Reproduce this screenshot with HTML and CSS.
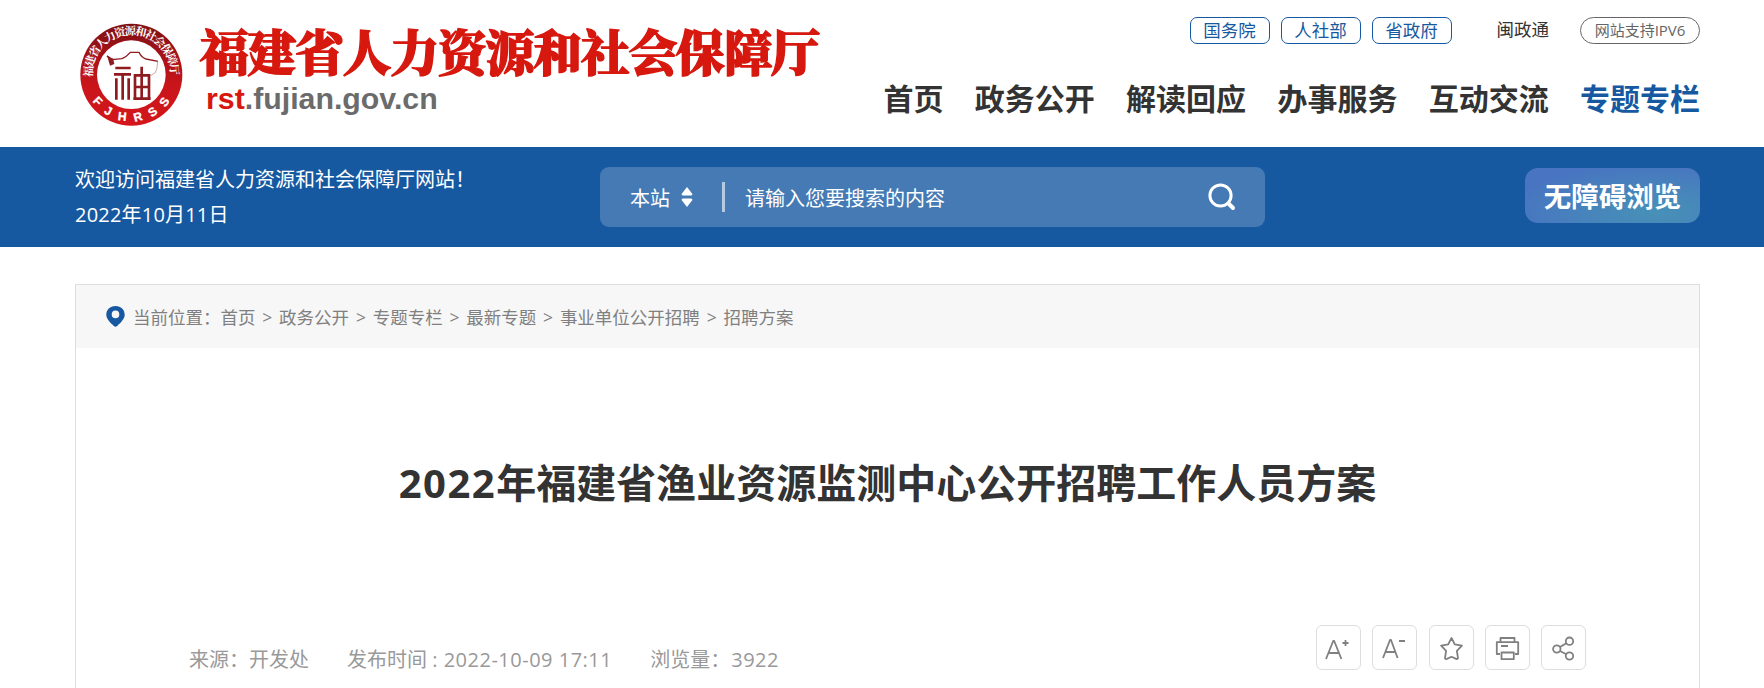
FILE: index.html
```html
<!DOCTYPE html>
<html lang="zh-CN">
<head>
    <meta charset="UTF-8">
    <meta name="viewport" content="width=device-width, initial-scale=1.0">
    <title>2022年福建省渔业资源监测中心公开招聘工作人员方案</title>
    <link rel="stylesheet" href="styles.css">
</head>
<body>
    <header class="header container">
        <a href="#" class="logo">
            <svg width="750" height="147" viewBox="45 -30 2250 441">
                <defs>
                    <linearGradient id="ring" x1="0" y1="0" x2="0" y2="1">
                        <stop offset="0" stop-color="#7d1015"/>
                        <stop offset="0.6" stop-color="#c9151a"/>
                        <stop offset="1" stop-color="#d3161b"/>
                    </linearGradient>
                    <path id="arc-top" d="M98 202 A116.5 116.5 0 1 1 330 202"/>
                    <path id="arc-bottom" d="M74 194 A140 140 0 0 0 354 194"/>
                </defs>
                <circle cx="214" cy="194" r="153" fill="url(#ring)"/>
                <circle cx="214" cy="194" r="103" fill="#fff"/>
                <text class="ring-cn"><textPath href="#arc-top" textLength="382">福建省人力资源和社会保障厅</textPath></text>
                <text class="ring-en"><textPath href="#arc-bottom" startOffset="53%" text-anchor="middle">FJHRSS</textPath></text>
                <g fill="none" stroke="#8f1a1f">
                    <path stroke-width="4" d="M141 138 Q151 149 164 148 L186 146 Q199 141 211 127 H237 Q244 143 258 147 L294 154"/>
                    <path stroke-width="2" stroke="#b9787a" d="M293 154 Q292 178 286 188 L271 197"/>
                    <path fill="#8f1a1f" stroke="none" d="M141 136 L160 148 L163 162 L150 167 Z"/>
                    <path stroke-width="8" d="M166 174 H212 M162 193 H213 M188 193 V269 M169 205 V269 M206 205 V269 M245 170 V266 M225 266 V196 H267 V266 M220 266 H272 M225 231 H267"/>
                </g>
                <text class="logo-name" x="419" y="183" textLength="1862">福建省人力资源和社会保障厅</text>
                <text class="logo-url" x="438" y="298" textLength="695" lengthAdjust="spacingAndGlyphs"><tspan fill="#d6180f">rst</tspan>.fujian.gov.cn</text>
            </svg>
        </a>
        <div class="header-right">
            <div class="top-links">
                <a href="#" class="dept">国务院</a>
                <a href="#" class="dept">人社部</a>
                <a href="#" class="dept">省政府</a>
                <a href="#" class="mzt">闽政通</a>
                <span class="ipv6">网站支持IPV6</span>
            </div>
            <nav class="nav">
                <a href="#">首页</a>
                <a href="#">政务公开</a>
                <a href="#">解读回应</a>
                <a href="#">办事服务</a>
                <a href="#">互动交流</a>
                <a href="#" class="active">专题专栏</a>
            </nav>
        </div>
    </header>

    <div class="bar">
        <div class="bar-inner container">
            <div class="welcome">
                <p>欢迎访问福建省人力资源和社会保障厅网站！</p>
                <p class="today">2022年10月11日</p>
            </div>
            <div class="search">
                <span class="search-type">本站</span>
                <svg class="search-arrows" width="12" height="22" viewBox="0 0 12 22"><path fill="#fff" d="M6 1 L11.4 8 Q11.6 9.4 10 9.5 H2 Q.4 9.4 .6 8 Z M6 21 L.6 14 Q.4 12.6 2 12.5 H10 Q11.6 12.6 11.4 14 Z"/></svg>
                <span class="search-line"></span>
                <span class="search-text">请输入您要搜索的内容</span>
                <svg class="search-icon" width="28" height="28" viewBox="0 0 28 28" fill="none" stroke="#fff" stroke-linecap="round"><circle cx="12.5" cy="12.5" r="10.6" stroke-width="3"/><path stroke-width="4" d="M20.5 20.5 L25 25"/></svg>
            </div>
            <a href="#" class="barrier-free">无障碍浏览</a>
        </div>
    </div>

    <main class="main">
        <div class="crumbs">
            <svg class="pin" width="19" height="21" viewBox="0 0 19 21"><path fill="#1659a1" fill-rule="evenodd" d="M9.5 0 C4 0 .3 3.9 .3 8.8 C.3 13.5 5 17.2 7.8 20 Q9.5 21.5 11.2 20 C14 17.2 18.7 13.5 18.7 8.8 C18.7 3.9 15 0 9.5 0 Z M9.5 4.6 A3.8 3.8 0 1 1 9.5 12.2 A3.8 3.8 0 1 1 9.5 4.6 Z"/></svg>
            <span>当前位置：</span>
            <a href="#">首页</a><i>&gt;</i>
            <a href="#">政务公开</a><i>&gt;</i>
            <a href="#">专题专栏</a><i>&gt;</i>
            <a href="#">最新专题</a><i>&gt;</i>
            <a href="#">事业单位公开招聘</a><i>&gt;</i>
            <a href="#">招聘方案</a>
        </div>
        <h1 class="title"><span class="year">2022</span>年福建省渔业资源监测中心公开招聘工作人员方案</h1>
        <div class="article-info">
            <div class="meta">
                <span class="source">来源：开发处</span>
                <span class="date">发布时间 : <span class="num">2022-10-09 17:11</span></span>
                <span>浏览量：<span class="num">3922</span></span>
            </div>
            <div class="tools">
                <a href="#" title="放大"><svg width="43" height="43" viewBox="0 0 43 43"><path d="M9 33 L16.2 15 H17.2 L24.4 33 M11.8 27 H21.6 M25.5 17 H31.5 M28.5 14 V20"/></svg></a>
                <a href="#" title="缩小"><svg width="43" height="43" viewBox="0 0 43 43"><path d="M10 32 L17 14 H18 L24.6 32 M12.6 26 H22 M26 15 H32"/></svg></a>
                <a href="#" title="收藏"><svg width="43" height="43" viewBox="0 0 43 43"><path d="M21.5 12 L24.8 18.4 L31.9 19.6 L26.9 24.8 L28 32.2 Q27.5 33.4 26.1 32.9 L21.5 30.8 L16.9 32.9 Q15.1 33.4 15 32.2 L16.1 24.8 L11.1 19.6 L18.2 18.4 Z"/></svg></a>
                <a href="#" title="打印"><svg width="43" height="43" viewBox="0 0 43 43"><path d="M14.5 16 V12 H28.5 V16 M14 28 H10.8 V16.2 H32.2 V28 H29 M15.5 26.5 H27.8 V33.2 H15.5 Z M15 20 H22"/></svg></a>
                <a href="#" title="分享"><svg width="43" height="43" viewBox="0 0 43 43"><circle cx="14.8" cy="23" r="3.7"/><circle cx="27.5" cy="15.2" r="3.7"/><circle cx="27.5" cy="30" r="3.7"/><path d="M18 21 L24.3 17.2 M18 25 L24.3 28.3"/></svg></a>
            </div>
        </div>
    </main>
</body>
</html>
```
FILE: styles.css
```css
* {
    box-sizing: border-box;
}
body {
    margin: 0;
    height: 688px;
    overflow: hidden;
    background: #fff;
    color: #333;
    font-family: "Open Sans", "Noto Sans CJK SC", sans-serif;
    font-size: 20px;
}
a {
    color: inherit;
    text-decoration: none;
}
p {
    margin: 0;
}
svg {
    display: block;
    flex: none;
}
.container {
    width: 1625px;
    margin: 0 64px 0 75px;
}

/* header */
.header {
    display: flex;
    justify-content: space-between;
    height: 147px;
}
.logo-name {
    font-family: "Noto Serif CJK SC", "Noto Sans CJK SC", serif;
    font-weight: 900;
    font-size: 147px;
    fill: #d6180f;
    stroke: #d6180f;
    stroke-width: 4px;
}
.logo-url {
    font-family: "Liberation Sans", sans-serif;
    font-weight: bold;
    font-size: 91px;
    fill: #6b6b6b;
}
.ring-cn {
    font-family: "Noto Serif CJK SC", "Noto Sans CJK SC", serif;
    font-weight: bold;
    font-size: 34px;
    fill: #fff;
}
.ring-en {
    font-family: "Liberation Sans", sans-serif;
    font-weight: bold;
    font-size: 36px;
    letter-spacing: 26px;
    fill: #fff;
    stroke: #fff;
    stroke-width: 1px;
}
.header-right {
    display: flex;
    flex-direction: column;
    align-items: flex-end;
    padding-top: 17px;
}
.top-links {
    display: flex;
    height: 27px;
    font-size: 17.5px;
    line-height: 25px;
}
.dept {
    width: 80px;
    margin-right: 11px;
    border: 1px solid #1659a1;
    border-radius: 7px;
    color: #1659a1;
    text-align: center;
}
.mzt {
    margin: 0 31px 0 34px;
}
.ipv6 {
    width: 120px;
    border: 1px solid #666;
    border-radius: 14px;
    color: #666;
    font-size: 15px;
    text-align: center;
}
.nav {
    display: flex;
    gap: 31.3px;
    margin-top: 33px;
    font-size: 30px;
    line-height: 44px;
    font-weight: bold;
}
.nav .active {
    color: #1659a1;
}

/* blue bar */
.bar {
    height: 100px;
    background: #1659a1;
    color: #fff;
}
.bar-inner {
    display: flex;
}
.welcome {
    width: 525px;
    padding-top: 15px;
    line-height: 35px;
    white-space: nowrap;
}
.today {
    letter-spacing: 0.2px;
}
.search {
    display: flex;
    align-items: center;
    width: 665px;
    height: 60px;
    margin-top: 20px;
    padding: 0 29px 0 30px;
    border-radius: 9px;
    background: #457ab4;
}
.search-arrows {
    margin-left: 11px;
}
.search-line {
    width: 3px;
    height: 30px;
    margin: 0 20px 0 29px;
    background: #b5cae1;
}
.search-icon {
    margin-left: auto;
}
.barrier-free {
    width: 175px;
    height: 55px;
    margin: 21px 0 0 auto;
    border-radius: 13px;
    background: radial-gradient(ellipse at 75% 80%, #4791b7 0%, #4785bb 35%, #4874c1 80%);
    font-size: 27.5px;
    line-height: 57px;
    font-weight: bold;
    text-align: center;
}

/* article */
.main {
    width: 1625px;
    height: 420px;
    margin: 37px 64px 0 75px;
    border: 1px solid #ddd;
}
.crumbs {
    display: flex;
    align-items: center;
    height: 63px;
    padding-left: 30px;
    background: #f7f7f7;
    color: #808080;
    font-size: 17.5px;
    line-height: 66px;
}
.pin {
    margin-right: 8px;
}
.crumbs i {
    width: 23.6px;
    font-style: normal;
    text-align: center;
}
.title {
    margin: 105px 0 0;
    font-size: 40px;
    line-height: 60px;
    text-align: center;
}
.year {
    letter-spacing: 1.5px;
}
.article-info {
    display: flex;
    justify-content: space-between;
    margin-top: 112px;
    padding: 0 113px;
}
.meta {
    display: flex;
    padding-top: 20px;
    color: #999;
    line-height: 30px;
    white-space: nowrap;
}
.source,
.date {
    margin-right: 38px;
}
.num {
    margin-left: 1px;
    letter-spacing: 0.5px;
}
.tools {
    display: flex;
    gap: 11.25px;
}
.tools a {
    width: 45px;
    height: 45px;
    border: 1px solid #ddd;
    border-radius: 6px;
}
.tools svg {
    fill: none;
    stroke: #808080;
    stroke-width: 1.8;
    stroke-linejoin: round;
}
```
